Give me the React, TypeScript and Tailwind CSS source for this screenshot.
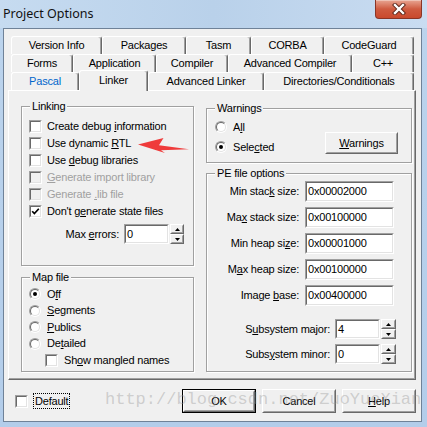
import type { ReactNode } from 'react'

const row1 = [
  { t: 'Version Info', w: 91 },
  { t: 'Packages', w: 84 },
  { t: 'Tasm', w: 65 },
  { t: 'CORBA', w: 73 },
  { t: 'CodeGuard', w: 90 },
]

const row2 = [
  { t: 'Forms', w: 62 },
  { t: 'Application', w: 83 },
  { t: 'Compiler', w: 72 },
  { t: 'Advanced Compiler', w: 124 },
  { t: 'C++', w: 62 },
]

function Tab({ children, w, className = '' }: { children: ReactNode; w: number; className?: string }) {
  return (
    <div
      className={`flex h-[18px] shrink-0 items-center justify-center rounded-t-[3px] border-t border-r border-l border-t-white border-r-[#696969] border-l-white shadow-[inset_-1px_0_0_#a0a0a0] ${className}`}
      style={{ width: w }}
    >
      {children}
    </div>
  )
}

function Sunken({ className = '', children }: { className?: string; children?: ReactNode }) {
  return (
    <div className={`flex shrink-0 border border-t-[#a0a0a0] border-r-white border-b-white border-l-[#a0a0a0] ${className}`}>
      <div className="flex flex-1 items-center border border-t-[#696969] border-r-[#e3e3e3] border-b-[#e3e3e3] border-l-[#696969] bg-white pl-[1px]">
        {children}
      </div>
    </div>
  )
}

function Raised({ className = '', children }: { className?: string; children?: ReactNode }) {
  return (
    <div className={`flex shrink-0 border border-t-white border-r-[#696969] border-b-[#696969] border-l-white ${className}`}>
      <div className="flex flex-1 items-center justify-center border border-t-[#f0f0f0] border-r-[#a0a0a0] border-b-[#a0a0a0] border-l-[#f0f0f0] bg-[#f0f0f0]">
        {children}
      </div>
    </div>
  )
}

function Check({ checked, disabled }: { checked?: boolean; disabled?: boolean }) {
  return (
    <span className="flex h-[13px] w-[13px] shrink-0 border border-t-[#a0a0a0] border-r-white border-b-white border-l-[#a0a0a0]">
      <span
        className={`flex flex-1 items-center justify-center border border-t-[#696969] border-r-[#e3e3e3] border-b-[#e3e3e3] border-l-[#696969] ${disabled ? 'bg-[#f0f0f0]' : 'bg-white'}`}
      >
        {checked && (
          <svg width="9" height="9" viewBox="0 0 9 9">
            <path d="M1.2 4.2 L3.4 6.6 L7.8 1.8" fill="none" stroke="#000" strokeWidth="1.7" />
          </svg>
        )}
      </span>
    </span>
  )
}

function Radio({ checked }: { checked?: boolean }) {
  return (
    <span className="flex h-[12px] w-[12px] shrink-0 rounded-full border border-t-[#a0a0a0] border-r-white border-b-white border-l-[#a0a0a0]">
      <span className="flex flex-1 items-center justify-center rounded-full border border-t-[#696969] border-r-[#e3e3e3] border-b-[#e3e3e3] border-l-[#696969] bg-white">
        {checked && <span className="h-[4px] w-[4px] rounded-full bg-black" />}
      </span>
    </span>
  )
}

function Spin({ className = '' }: { className?: string }) {
  return (
    <div className={`flex shrink-0 flex-col ${className}`}>
      <Raised className="h-1/2">
        <svg width="5" height="3" viewBox="0 0 5 3">
          <path d="M2.5 0 L5 3 L0 3 Z" fill="#000" />
        </svg>
      </Raised>
      <Raised className="h-1/2">
        <svg width="5" height="3" viewBox="0 0 5 3">
          <path d="M0 0 L5 0 L2.5 3 Z" fill="#000" />
        </svg>
      </Raised>
    </div>
  )
}

function Group({ label, className = '', children }: { label: string; className?: string; children: ReactNode }) {
  return (
    <div className={`relative border border-[#a0a0a0] shadow-[1px_1px_0_#fff,inset_1px_1px_0_#fff] ${className}`}>
      <span className="absolute top-[-7px] left-[8px] bg-[#f0f0f0] px-[2px] leading-[13px]">{label}</span>
      {children}
    </div>
  )
}

function CheckRow({ children, checked, disabled }: { children: ReactNode; checked?: boolean; disabled?: boolean }) {
  return (
    <div className="flex h-[17px] items-center gap-[5px]">
      <Check checked={checked} disabled={disabled} />
      <span className={disabled ? 'text-[#a0a0a0]' : ''}>{children}</span>
    </div>
  )
}

function RadioRow({ children, checked, h = 'h-[16.5px]' }: { children: ReactNode; checked?: boolean; h?: string }) {
  return (
    <div className={`flex items-center gap-[6px] ${h}`}>
      <Radio checked={checked} />
      <span>{children}</span>
    </div>
  )
}

function Field({ label, value }: { label: ReactNode; value: string }) {
  return (
    <div className="flex h-[21px] items-center">
      <span className="w-[92px] text-right">{label}</span>
      <Sunken className="ml-[6px] h-[21px] w-[89px]">{value}</Sunken>
    </div>
  )
}

function SpinField({ label, value, className = '' }: { label: ReactNode; value: string; className?: string }) {
  return (
    <div className={`flex h-[20px] items-center ${className}`}>
      <span className="w-[123px] text-right">{label}</span>
      <Sunken className="ml-[5px] h-[20px] w-[45px]">{value}</Sunken>
      <Spin className="ml-[1px] h-[20px] w-[15px]" />
    </div>
  )
}

export default function App() {
  return (
    <div className="relative h-[427px] w-[427px] overflow-hidden bg-linear-to-b from-[#bcd4ed] to-[#b3cdea] font-['Liberation_Sans',Arial,sans-serif] text-[11px] leading-[13px] tracking-[-0.2px] text-black">
      {/* title bar */}
      <div className="flex h-[28px] bg-linear-to-r from-[#c6dbf0] via-[#b9d1ea] to-[#c9dcf1]">
        <span className="self-center pb-[1px] pl-[3px] font-['Noto_Sans',sans-serif] text-[12.5px] tracking-normal text-[#111]">
          Project Options
        </span>
        <div className="mr-[5px] ml-auto flex h-[19px] w-[47px] items-center justify-center rounded-b-[4px] border border-t-0 border-[#8a3526] bg-linear-to-b from-[#e7a592] via-[#cf5b40] to-[#c9492d] shadow-[inset_0_1px_0_rgba(255,255,255,0.35)]">
          <svg width="14" height="12" viewBox="0 0 14 12">
            <path d="M3 2 L11 10 M11 2 L3 10" stroke="#5a2418" strokeWidth="4.2" strokeLinecap="square" />
            <path d="M3 2 L11 10 M11 2 L3 10" stroke="#fff" strokeWidth="2.4" strokeLinecap="square" />
          </svg>
        </div>
      </div>

      <div className="flex">
        <div className="w-[3px]" />
        {/* client area */}
        <div className="flex h-[394px] w-[419px] flex-col border border-[#6f8298] bg-[#f0f0f0] pt-[7px] pr-[5px] pl-[4px]">
          {/* tab strip */}
          <div className="flex flex-col pl-[3px]">
            <div className="flex">
              {row1.map((t) => (
                <Tab key={t.t} w={t.w}>
                  {t.t}
                </Tab>
              ))}
            </div>
            <div className="flex">
              {row2.map((t) => (
                <Tab key={t.t} w={t.w}>
                  {t.t}
                </Tab>
              ))}
            </div>
            <div className="relative z-10 -mt-[2px] flex items-end">
              <Tab w={68} className="text-[#0066cc]">
                Pascal
              </Tab>
              <div className="-mb-[1px] flex h-[21px] w-[69px] shrink-0 items-center justify-center rounded-t-[3px] border-t border-r border-l border-t-white border-r-[#696969] border-l-white bg-[#f0f0f0] pb-[2px] shadow-[inset_-1px_0_0_#a0a0a0]">
                Linker
              </div>
              <Tab w={116}>Advanced Linker</Tab>
              <Tab w={150}>Directories/Conditionals</Tab>
            </div>
          </div>

          {/* tab page */}
          <div className="flex h-[290px] w-[408px] border border-t-white border-r-[#696969] border-b-[#696969] border-l-white pt-[15px] pl-[12px] shadow-[inset_-1px_-1px_0_#a0a0a0]">
            <div className="flex w-[173px] flex-col">
              <Group label="Linking" className="h-[160px] pt-[11px] pr-[9px] pl-[7px]">
                <CheckRow>
                  Create debug <u>i</u>nformation
                </CheckRow>
                <CheckRow>
                  Use dynamic <u>R</u>TL
                </CheckRow>
                <CheckRow>
                  Use <u>d</u>ebug libraries
                </CheckRow>
                <CheckRow disabled>
                  <u>G</u>enerate import library
                </CheckRow>
                <CheckRow disabled>
                  Generate <u>.</u>lib file
                </CheckRow>
                <CheckRow checked>
                  Don't g<u>e</u>nerate state files
                </CheckRow>
                <div className="mt-[4px] flex h-[20px] items-center justify-end">
                  <span>
                    Max <u>e</u>rrors:
                  </span>
                  <Sunken className="ml-[5px] h-[20px] w-[45px]">0</Sunken>
                  <Spin className="ml-[1px] h-[20px] w-[14px]" />
                </div>
              </Group>
              <Group label="Map file" className="mt-[11px] h-[95px] pt-[8px] pl-[7px]">
                <RadioRow checked>
                  O<u>f</u>f
                </RadioRow>
                <RadioRow>
                  <u>S</u>egments
                </RadioRow>
                <RadioRow>
                  <u>P</u>ublics
                </RadioRow>
                <RadioRow>
                  De<u>t</u>ailed
                </RadioRow>
                <div className="ml-[16px] flex h-[17px] items-center gap-[6px]">
                  <Check />
                  <span>
                    Sh<u>o</u>w mangled names
                  </span>
                </div>
              </Group>
            </div>

            <div className="mt-[2px] ml-[12px] flex w-[206px] flex-col">
              <Group label="Warnings" className="flex h-[55px] pt-[8px] pl-[8px]">
                <div className="flex flex-col">
                  <RadioRow h="h-[20px]">
                    A<u>l</u>l
                  </RadioRow>
                  <RadioRow h="h-[20px]" checked>
                    Sele<u>c</u>ted
                  </RadioRow>
                </div>
                <Raised className="mt-[15px] mr-[13px] ml-auto h-[22px] w-[73px]">
                  <span>
                    <u>W</u>arnings
                  </span>
                </Raised>
              </Group>
              <Group label="PE file options" className="mt-[10px] flex h-[199px] flex-col gap-[5px] pt-[7px]">
                <Field
                  label={
                    <>
                      Min stac<u>k</u> size:
                    </>
                  }
                  value="0x00002000"
                />
                <Field
                  label={
                    <>
                      Ma<u>x</u> stack size:
                    </>
                  }
                  value="0x00100000"
                />
                <Field
                  label={
                    <>
                      Min heap si<u>z</u>e:
                    </>
                  }
                  value="0x00001000"
                />
                <Field
                  label={
                    <>
                      M<u>a</u>x heap size:
                    </>
                  }
                  value="0x00100000"
                />
                <Field
                  label={
                    <>
                      Image <u>b</u>ase:
                    </>
                  }
                  value="0x00400000"
                />
                <SpinField
                  className="mt-[8px]"
                  label={
                    <>
                      S<u>u</u>bsystem major:
                    </>
                  }
                  value="4"
                />
                <SpinField
                  label={
                    <>
                      Subs<u>y</u>stem minor:
                    </>
                  }
                  value="0"
                />
              </Group>
            </div>
          </div>

          {/* bottom buttons */}
          <div className="mt-[9px] flex h-[24px] items-center">
            <div className="ml-[7px]">
              <Check />
            </div>
            <span className="ml-[5px] flex h-[16px] items-center border border-dotted border-black px-[1px]">Default</span>
            <div className="ml-auto flex gap-[6px]">
              <div className="flex h-[24px] w-[74px] border border-black">
                <Raised className="flex-1">OK</Raised>
              </div>
              <Raised className="h-[24px] w-[74px]">Cancel</Raised>
              <Raised className="h-[24px] w-[74px]">
                <span>
                  <u>H</u>elp
                </span>
              </Raised>
            </div>
          </div>
        </div>
      </div>

      {/* watermark */}
      <span className="pointer-events-none absolute top-[390px] left-[105px] font-['Liberation_Mono',monospace] text-[17px] leading-[20px] tracking-normal whitespace-nowrap text-[rgba(150,150,150,0.4)]">
        http://blog.csdn.net/ZuoYueXian
      </span>

      {/* red annotation arrow */}
      <svg className="pointer-events-none absolute top-0 left-0" width="427" height="427" viewBox="0 0 427 427">
        <path
          d="M138 144.5 L163.5 138 L159 145.2 L189 149.2 L161 150.3 L165 153 Z"
          fill="#ef3b3b"
        />
      </svg>
    </div>
  )
}
